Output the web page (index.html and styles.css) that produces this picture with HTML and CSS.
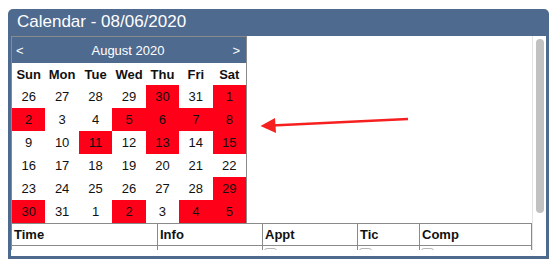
FILE: index.html
```html
<!DOCTYPE html>
<html>
<head>
<meta charset="utf-8">
<link rel="stylesheet" href="styles.css">
</head>
<body>
<div class="page">
  <div class="frame">
    <div class="title">Calendar - 08/06/2020</div>
    <div class="body">
      <div class="scroll">
        <div class="content">
          <div class="cal">
            <div class="cal-head"><span>&lt;</span><span class="month">August 2020</span><span>&gt;</span></div>
            <div class="grid">
              <div class="dh">Sun</div><div class="dh">Mon</div><div class="dh">Tue</div><div class="dh">Wed</div><div class="dh">Thu</div><div class="dh">Fri</div><div class="dh">Sat</div>
              <div class="d">26</div><div class="d">27</div><div class="d">28</div><div class="d">29</div><div class="d hl">30</div><div class="d">31</div><div class="d hl">1</div>
              <div class="d hl">2</div><div class="d">3</div><div class="d">4</div><div class="d hl">5</div><div class="d hl">6</div><div class="d hl">7</div><div class="d hl">8</div>
              <div class="d">9</div><div class="d">10</div><div class="d hl">11</div><div class="d">12</div><div class="d hl">13</div><div class="d">14</div><div class="d hl">15</div>
              <div class="d">16</div><div class="d">17</div><div class="d">18</div><div class="d">19</div><div class="d">20</div><div class="d">21</div><div class="d">22</div>
              <div class="d">23</div><div class="d">24</div><div class="d">25</div><div class="d">26</div><div class="d">27</div><div class="d">28</div><div class="d hl">29</div>
              <div class="d hl">30</div><div class="d">31</div><div class="d">1</div><div class="d hl">2</div><div class="d">3</div><div class="d hl">4</div><div class="d hl">5</div>
            </div>
          </div>
          <table class="list">
            <colgroup><col class="c1"><col class="c2"><col class="c3"><col class="c4"><col class="c5"></colgroup>
            <tr class="hdr"><th>Time</th><th>Info</th><th>Appt</th><th>Tic</th><th>Comp</th></tr>
            <tr class="row"><td></td><td></td><td><span class="cb"></span></td><td><span class="cb"></span></td><td><span class="cb"></span></td></tr>
          </table>
        </div>
        <div class="track"><div class="thumb"></div></div>
      </div>
    </div>
  </div>
  <svg class="arrow" width="560" height="262" viewBox="0 0 560 262">
    <line x1="408" y1="119" x2="272" y2="125.5" stroke="#f72020" stroke-width="2.6"/>
    <polygon points="260.5,126 275,118 276,133" fill="#f72020"/>
  </svg>
</div>
</body>
</html>
```
FILE: styles.css
```css
html, body {
  margin: 0;
  padding: 0;
  background: #fff;
}
.page {
  position: relative;
  width: 560px;
  height: 262px;
  padding: 9px 0 0 8px;
  box-sizing: border-box;
  font-family: "Liberation Sans", Arial, sans-serif;
}
.frame {
  width: 541px;
  background: #4f6a8f;
  border-radius: 5px 5px 0 0;
  padding: 0 3px 3px 3px;
  box-sizing: border-box;
}
.title {
  height: 27px;
  line-height: 25px;
  padding-left: 6px;
  font-size: 17px;
  color: #fff;
}
.body {
  background: #fff;
  height: 220px;
  padding-bottom: 6px;
  box-sizing: border-box;
}
.scroll {
  display: flex;
  height: 214px;
  overflow: hidden;
}
.content {
  width: 521px;
  flex: none;
}
.cal {
  width: 236px;
  border: 1px solid #8a8a8a;
  border-bottom: none;
  box-sizing: border-box;
}
.cal-head {
  height: 26px;
  background: #4f6a8f;
  color: #fff;
  font-size: 13px;
  display: flex;
  align-items: center;
  justify-content: space-between;
  padding: 0 6px 0 4px;
}
.grid {
  display: grid;
  grid-template-columns: repeat(7, 1fr);
  grid-template-rows: 22px repeat(6, 23px);
  font-size: 13px;
  color: #111;
}
.dh {
  font-weight: bold;
  display: flex;
  align-items: center;
  justify-content: center;
}
.d {
  display: flex;
  align-items: center;
  justify-content: center;
}
.hl {
  background: #ff0019;
}
.list {
  border-collapse: collapse;
  table-layout: fixed;
  width: 520px;
  font-size: 13px;
}
.c1 { width: 146px; }
.c2 { width: 105px; }
.c3 { width: 95px; }
.c4 { width: 62px; }
.c5 { width: 112px; }
.list th {
  text-align: left;
  font-weight: bold;
  height: 21px;
  padding: 0 0 0 2px;
  border: 1px solid #8a8a8a;
  color: #111;
}
.list td {
  border-left: 1px solid #8a8a8a;
  border-right: 1px solid #8a8a8a;
  height: 22px;
  padding: 2px 0 0 1px;
  vertical-align: top;
}
.cb {
  display: block;
  width: 11px;
  height: 11px;
  border: 1px solid #b5b5b5;
  border-radius: 3px;
}
.track {
  width: 14px;
  flex: none;
  border-left: 1px solid #e4e4e4;
  box-sizing: border-box;
  padding: 3px 2px 0 3px;
}
.thumb {
  width: 8px;
  height: 174px;
  background: #c1c1c1;
  border-radius: 4px;
}
.arrow {
  position: absolute;
  left: 0;
  top: 0;
  pointer-events: none;
}
```
